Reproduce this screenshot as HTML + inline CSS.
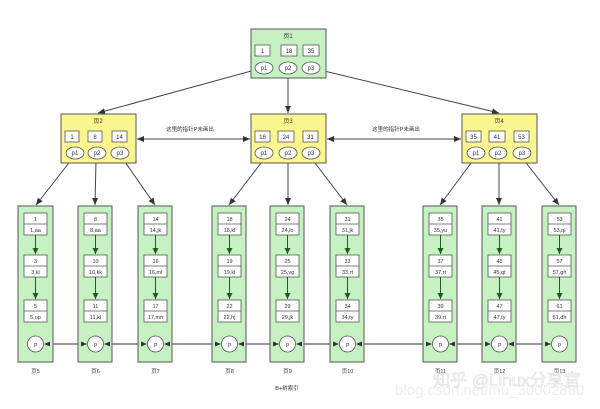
<!DOCTYPE html>
<html><head><meta charset="utf-8"><style>
html,body{margin:0;padding:0;background:#fff;width:600px;height:409px;overflow:hidden}
svg text{font-family:"Liberation Sans","Noto Sans CJK SC",sans-serif;fill:#333}
</style></head><body>
<svg width="600" height="409" viewBox="0 0 600 409" xmlns="http://www.w3.org/2000/svg">
<defs>
<marker id="a" markerWidth="8" markerHeight="8" refX="7" refY="3" orient="auto" markerUnits="userSpaceOnUse"><path d="M0,0 L7,3 L0,6 z" fill="#333"/></marker>
<marker id="b" markerWidth="8" markerHeight="8" refX="0" refY="3" orient="auto" markerUnits="userSpaceOnUse"><path d="M7,0 L0,3 L7,6 z" fill="#333"/></marker>
<marker id="g" markerWidth="8" markerHeight="8" refX="6" refY="3" orient="auto" markerUnits="userSpaceOnUse"><path d="M0,0 L6,3 L0,6 z" fill="#1f5a1f"/></marker>
</defs>
<text x="395" y="395" font-size="15" style="fill:#eeeeee">blog.csdn.net/mu_30002880</text>
<g stroke="#444" stroke-width="1" fill="none">
<line x1="255" y1="70" x2="98" y2="113" marker-end="url(#a)"/>
<line x1="288" y1="75" x2="288" y2="113" marker-end="url(#a)"/>
<line x1="320" y1="70" x2="499" y2="113" marker-end="url(#a)"/>
<line x1="137" y1="139" x2="250" y2="139" marker-end="url(#a)" marker-start="url(#b)"/>
<line x1="327" y1="139" x2="461" y2="139" marker-end="url(#a)" marker-start="url(#b)"/>
<line x1="72" y1="159" x2="36" y2="205" marker-end="url(#a)"/>
<line x1="96" y1="160" x2="95" y2="205" marker-end="url(#a)"/>
<line x1="123" y1="159" x2="155" y2="205" marker-end="url(#a)"/>
<line x1="264" y1="159" x2="229" y2="205" marker-end="url(#a)"/>
<line x1="288" y1="160" x2="288" y2="205" marker-end="url(#a)"/>
<line x1="312" y1="159" x2="347" y2="205" marker-end="url(#a)"/>
<line x1="474" y1="159" x2="440" y2="205" marker-end="url(#a)"/>
<line x1="499" y1="160" x2="499" y2="205" marker-end="url(#a)"/>
<line x1="523" y1="159" x2="559" y2="205" marker-end="url(#a)"/>
</g>
<text x="190" y="131" font-size="5.5" text-anchor="middle">这里的指针P未画出</text>
<text x="396" y="131" font-size="5.5" text-anchor="middle">这里的指针P未画出</text>

<g stroke="#555" stroke-width="1">
<rect x="251" y="29" width="75" height="49" fill="#c6f2c3"/>
<rect x="61" y="114" width="75" height="49" fill="#fbf68f"/>
<rect x="251" y="114" width="75" height="49" fill="#fbf68f"/>
<rect x="462" y="114" width="75" height="49" fill="#fbf68f"/>
</g>
<g font-size="6" text-anchor="middle">
<text x="288" y="38">页1</text><text x="98" y="123">页2</text><text x="288" y="123">页3</text><text x="499" y="123">页4</text>
</g>
<g stroke="#555" stroke-width="0.8" fill="#fff">
<rect x="255" y="45" width="15" height="11"/><rect x="281" y="45" width="16" height="11"/><rect x="303" y="45" width="16" height="11"/>
<ellipse cx="264" cy="68" rx="9" ry="6"/><ellipse cx="288" cy="68" rx="9" ry="6"/><ellipse cx="311" cy="68" rx="9" ry="6"/>
<rect x="65" y="131" width="14" height="11"/><rect x="88" y="131" width="14" height="11"/><rect x="112" y="131" width="15" height="11"/>
<ellipse cx="75" cy="153" rx="9" ry="6"/><ellipse cx="97" cy="153" rx="9" ry="6"/><ellipse cx="120" cy="153" rx="9" ry="6"/>
<rect x="255" y="131" width="15" height="11"/><rect x="278" y="131" width="16" height="11"/><rect x="303" y="131" width="15" height="11"/>
<ellipse cx="264" cy="153" rx="9" ry="6"/><ellipse cx="288" cy="153" rx="9" ry="6"/><ellipse cx="311" cy="153" rx="9" ry="6"/>
<rect x="466" y="131" width="15" height="11"/><rect x="489" y="131" width="16" height="11"/><rect x="514" y="131" width="15" height="11"/>
<ellipse cx="476" cy="153" rx="9" ry="6"/><ellipse cx="498" cy="153" rx="9" ry="6"/><ellipse cx="522" cy="153" rx="9" ry="6"/>
</g>
<g font-size="6" text-anchor="middle">
<text x="262.5" y="53">1</text><text x="289" y="53">18</text><text x="311" y="53">35</text>
<text x="264" y="70">p1</text><text x="288" y="70">p2</text><text x="311" y="70">p3</text>
<text x="72" y="139">1</text><text x="95" y="139">8</text><text x="119.5" y="139">14</text>
<text x="75" y="155">p1</text><text x="97" y="155">p2</text><text x="120" y="155">p3</text>
<text x="262.5" y="139">18</text><text x="286" y="139">24</text><text x="310.5" y="139">31</text>
<text x="264" y="155">p1</text><text x="288" y="155">p2</text><text x="311" y="155">p3</text>
<text x="473.5" y="139">35</text><text x="497" y="139">41</text><text x="521.5" y="139">53</text>
<text x="476" y="155">p1</text><text x="498" y="155">p2</text><text x="522" y="155">p3</text>
</g>

<line x1="44" y1="344" x2="550" y2="344" stroke="#333" stroke-width="1"/>

<g>
<g transform="translate(18,0)"><rect x="0" y="206" width="35" height="156" fill="#c6f2c3" stroke="#555"/><g stroke="#555" stroke-width="0.8" fill="#fff"><rect x="6" y="213" width="23" height="22"/><line x1="6" y1="224" x2="29" y2="224"/><rect x="6" y="255" width="23" height="22"/><line x1="6" y1="266" x2="29" y2="266"/><rect x="6" y="300" width="23" height="22"/><line x1="6" y1="311" x2="29" y2="311"/><circle cx="17.5" cy="344" r="8"/></g><g stroke="#1f5a1f"><line x1="17.5" y1="235" x2="17.5" y2="254" marker-end="url(#g)"/><line x1="17.5" y1="277" x2="17.5" y2="299" marker-end="url(#g)"/></g><g font-size="5.5" text-anchor="middle"><text x="17.5" y="221">1</text><text x="17.5" y="232">1,aa</text><text x="17.5" y="263">3</text><text x="17.5" y="274">3,kl</text><text x="17.5" y="308">5</text><text x="17.5" y="319">5,op</text><text x="17.5" y="346">p</text><text x="17.5" y="373">页5</text></g></g>

<g transform="translate(78,0)"><rect x="0" y="206" width="34" height="156" fill="#c6f2c3" stroke="#555"/><g stroke="#555" stroke-width="0.8" fill="#fff"><rect x="6" y="213" width="23" height="22"/><line x1="6" y1="224" x2="29" y2="224"/><rect x="6" y="255" width="23" height="22"/><line x1="6" y1="266" x2="29" y2="266"/><rect x="6" y="300" width="23" height="22"/><line x1="6" y1="311" x2="29" y2="311"/><circle cx="17.5" cy="344" r="8"/></g><g stroke="#1f5a1f"><line x1="17.5" y1="235" x2="17.5" y2="254" marker-end="url(#g)"/><line x1="17.5" y1="277" x2="17.5" y2="299" marker-end="url(#g)"/></g><g font-size="5.5" text-anchor="middle"><text x="17.5" y="221">8</text><text x="17.5" y="232">8,aa</text><text x="17.5" y="263">10</text><text x="17.5" y="274">10,kk</text><text x="17.5" y="308">11</text><text x="17.5" y="319">11,kl</text><text x="17.5" y="346">p</text><text x="17.5" y="373">页6</text></g></g>

<g transform="translate(138,0)"><rect x="0" y="206" width="34" height="156" fill="#c6f2c3" stroke="#555"/><g stroke="#555" stroke-width="0.8" fill="#fff"><rect x="6" y="213" width="23" height="22"/><line x1="6" y1="224" x2="29" y2="224"/><rect x="6" y="255" width="23" height="22"/><line x1="6" y1="266" x2="29" y2="266"/><rect x="6" y="300" width="23" height="22"/><line x1="6" y1="311" x2="29" y2="311"/><circle cx="17.5" cy="344" r="8"/></g><g stroke="#1f5a1f"><line x1="17.5" y1="235" x2="17.5" y2="254" marker-end="url(#g)"/><line x1="17.5" y1="277" x2="17.5" y2="299" marker-end="url(#g)"/></g><g font-size="5.5" text-anchor="middle"><text x="17.5" y="221">14</text><text x="17.5" y="232">14,jk</text><text x="17.5" y="263">16</text><text x="17.5" y="274">16,ml</text><text x="17.5" y="308">17</text><text x="17.5" y="319">17,mn</text><text x="17.5" y="346">p</text><text x="17.5" y="373">页7</text></g></g>

<g transform="translate(212,0)"><rect x="0" y="206" width="34" height="156" fill="#c6f2c3" stroke="#555"/><g stroke="#555" stroke-width="0.8" fill="#fff"><rect x="6" y="213" width="23" height="22"/><line x1="6" y1="224" x2="29" y2="224"/><rect x="6" y="255" width="23" height="22"/><line x1="6" y1="266" x2="29" y2="266"/><rect x="6" y="300" width="23" height="22"/><line x1="6" y1="311" x2="29" y2="311"/><circle cx="17.5" cy="344" r="8"/></g><g stroke="#1f5a1f"><line x1="17.5" y1="235" x2="17.5" y2="254" marker-end="url(#g)"/><line x1="17.5" y1="277" x2="17.5" y2="299" marker-end="url(#g)"/></g><g font-size="5.5" text-anchor="middle"><text x="17.5" y="221">18</text><text x="17.5" y="232">18,kl</text><text x="17.5" y="263">19</text><text x="17.5" y="274">19,kl</text><text x="17.5" y="308">22</text><text x="17.5" y="319">22,hj</text><text x="17.5" y="346">p</text><text x="17.5" y="373">页8</text></g></g>

<g transform="translate(270,0)"><rect x="0" y="206" width="34" height="156" fill="#c6f2c3" stroke="#555"/><g stroke="#555" stroke-width="0.8" fill="#fff"><rect x="6" y="213" width="23" height="22"/><line x1="6" y1="224" x2="29" y2="224"/><rect x="6" y="255" width="23" height="22"/><line x1="6" y1="266" x2="29" y2="266"/><rect x="6" y="300" width="23" height="22"/><line x1="6" y1="311" x2="29" y2="311"/><circle cx="17.5" cy="344" r="8"/></g><g stroke="#1f5a1f"><line x1="17.5" y1="235" x2="17.5" y2="254" marker-end="url(#g)"/><line x1="17.5" y1="277" x2="17.5" y2="299" marker-end="url(#g)"/></g><g font-size="5.5" text-anchor="middle"><text x="17.5" y="221">24</text><text x="17.5" y="232">24,io</text><text x="17.5" y="263">25</text><text x="17.5" y="274">25,vg</text><text x="17.5" y="308">29</text><text x="17.5" y="319">29,jk</text><text x="17.5" y="346">p</text><text x="17.5" y="373">页9</text></g></g>

<g transform="translate(330,0)"><rect x="0" y="206" width="34" height="156" fill="#c6f2c3" stroke="#555"/><g stroke="#555" stroke-width="0.8" fill="#fff"><rect x="6" y="213" width="23" height="22"/><line x1="6" y1="224" x2="29" y2="224"/><rect x="6" y="255" width="23" height="22"/><line x1="6" y1="266" x2="29" y2="266"/><rect x="6" y="300" width="23" height="22"/><line x1="6" y1="311" x2="29" y2="311"/><circle cx="17.5" cy="344" r="8"/></g><g stroke="#1f5a1f"><line x1="17.5" y1="235" x2="17.5" y2="254" marker-end="url(#g)"/><line x1="17.5" y1="277" x2="17.5" y2="299" marker-end="url(#g)"/></g><g font-size="5.5" text-anchor="middle"><text x="17.5" y="221">31</text><text x="17.5" y="232">31,jk</text><text x="17.5" y="263">33</text><text x="17.5" y="274">33,rt</text><text x="17.5" y="308">34</text><text x="17.5" y="319">34,ty</text><text x="17.5" y="346">p</text><text x="17.5" y="373">页10</text></g></g>

<g transform="translate(423,0)"><rect x="0" y="206" width="34" height="156" fill="#c6f2c3" stroke="#555"/><g stroke="#555" stroke-width="0.8" fill="#fff"><rect x="6" y="213" width="23" height="22"/><line x1="6" y1="224" x2="29" y2="224"/><rect x="6" y="255" width="23" height="22"/><line x1="6" y1="266" x2="29" y2="266"/><rect x="6" y="300" width="23" height="22"/><line x1="6" y1="311" x2="29" y2="311"/><circle cx="17.5" cy="344" r="8"/></g><g stroke="#1f5a1f"><line x1="17.5" y1="235" x2="17.5" y2="254" marker-end="url(#g)"/><line x1="17.5" y1="277" x2="17.5" y2="299" marker-end="url(#g)"/></g><g font-size="5.5" text-anchor="middle"><text x="17.5" y="221">35</text><text x="17.5" y="232">35,yu</text><text x="17.5" y="263">37</text><text x="17.5" y="274">37,rt</text><text x="17.5" y="308">39</text><text x="17.5" y="319">39,rt</text><text x="17.5" y="346">p</text><text x="17.5" y="373">页11</text></g></g>

<g transform="translate(482,0)"><rect x="0" y="206" width="34" height="156" fill="#c6f2c3" stroke="#555"/><g stroke="#555" stroke-width="0.8" fill="#fff"><rect x="6" y="213" width="23" height="22"/><line x1="6" y1="224" x2="29" y2="224"/><rect x="6" y="255" width="23" height="22"/><line x1="6" y1="266" x2="29" y2="266"/><rect x="6" y="300" width="23" height="22"/><line x1="6" y1="311" x2="29" y2="311"/><circle cx="17.5" cy="344" r="8"/></g><g stroke="#1f5a1f"><line x1="17.5" y1="235" x2="17.5" y2="254" marker-end="url(#g)"/><line x1="17.5" y1="277" x2="17.5" y2="299" marker-end="url(#g)"/></g><g font-size="5.5" text-anchor="middle"><text x="17.5" y="221">41</text><text x="17.5" y="232">41,ty</text><text x="17.5" y="263">45</text><text x="17.5" y="274">45,qt</text><text x="17.5" y="308">47</text><text x="17.5" y="319">47,ty</text><text x="17.5" y="346">p</text><text x="17.5" y="373">页12</text></g></g>

<g transform="translate(542,0)"><rect x="0" y="206" width="34" height="156" fill="#c6f2c3" stroke="#555"/><g stroke="#555" stroke-width="0.8" fill="#fff"><rect x="6" y="213" width="23" height="22"/><line x1="6" y1="224" x2="29" y2="224"/><rect x="6" y="255" width="23" height="22"/><line x1="6" y1="266" x2="29" y2="266"/><rect x="6" y="300" width="23" height="22"/><line x1="6" y1="311" x2="29" y2="311"/><circle cx="17.5" cy="344" r="8"/></g><g stroke="#1f5a1f"><line x1="17.5" y1="235" x2="17.5" y2="254" marker-end="url(#g)"/><line x1="17.5" y1="277" x2="17.5" y2="299" marker-end="url(#g)"/></g><g font-size="5.5" text-anchor="middle"><text x="17.5" y="221">53</text><text x="17.5" y="232">53,qi</text><text x="17.5" y="263">57</text><text x="17.5" y="274">57,gh</text><text x="17.5" y="308">61</text><text x="17.5" y="319">61,dh</text><text x="17.5" y="346">p</text><text x="17.5" y="373">页13</text></g></g>
</g>

<g fill="#333">
<path d="M44,344 l6,-2.5 v5z"/>
<path d="M87,344 l-6,-2.5 v5z"/><path d="M104,344 l6,-2.5 v5z"/>
<path d="M147,344 l-6,-2.5 v5z"/><path d="M164,344 l6,-2.5 v5z"/>
<path d="M221,344 l-6,-2.5 v5z"/><path d="M238,344 l6,-2.5 v5z"/>
<path d="M279,344 l-6,-2.5 v5z"/><path d="M296,344 l6,-2.5 v5z"/>
<path d="M339,344 l-6,-2.5 v5z"/><path d="M356,344 l6,-2.5 v5z"/>
<path d="M432,344 l-6,-2.5 v5z"/><path d="M449,344 l6,-2.5 v5z"/>
<path d="M491,344 l-6,-2.5 v5z"/><path d="M508,344 l6,-2.5 v5z"/>
<path d="M551,344 l-6,-2.5 v5z"/>
</g>

<text x="287" y="390" font-size="5.5" text-anchor="middle">B+树索引</text>
<text x="433" y="386" font-size="17" style="fill:#f6f6f6;stroke:#dcdcdc;stroke-width:0.5">知乎 @Linux分享官</text>
</svg>
</body></html>
